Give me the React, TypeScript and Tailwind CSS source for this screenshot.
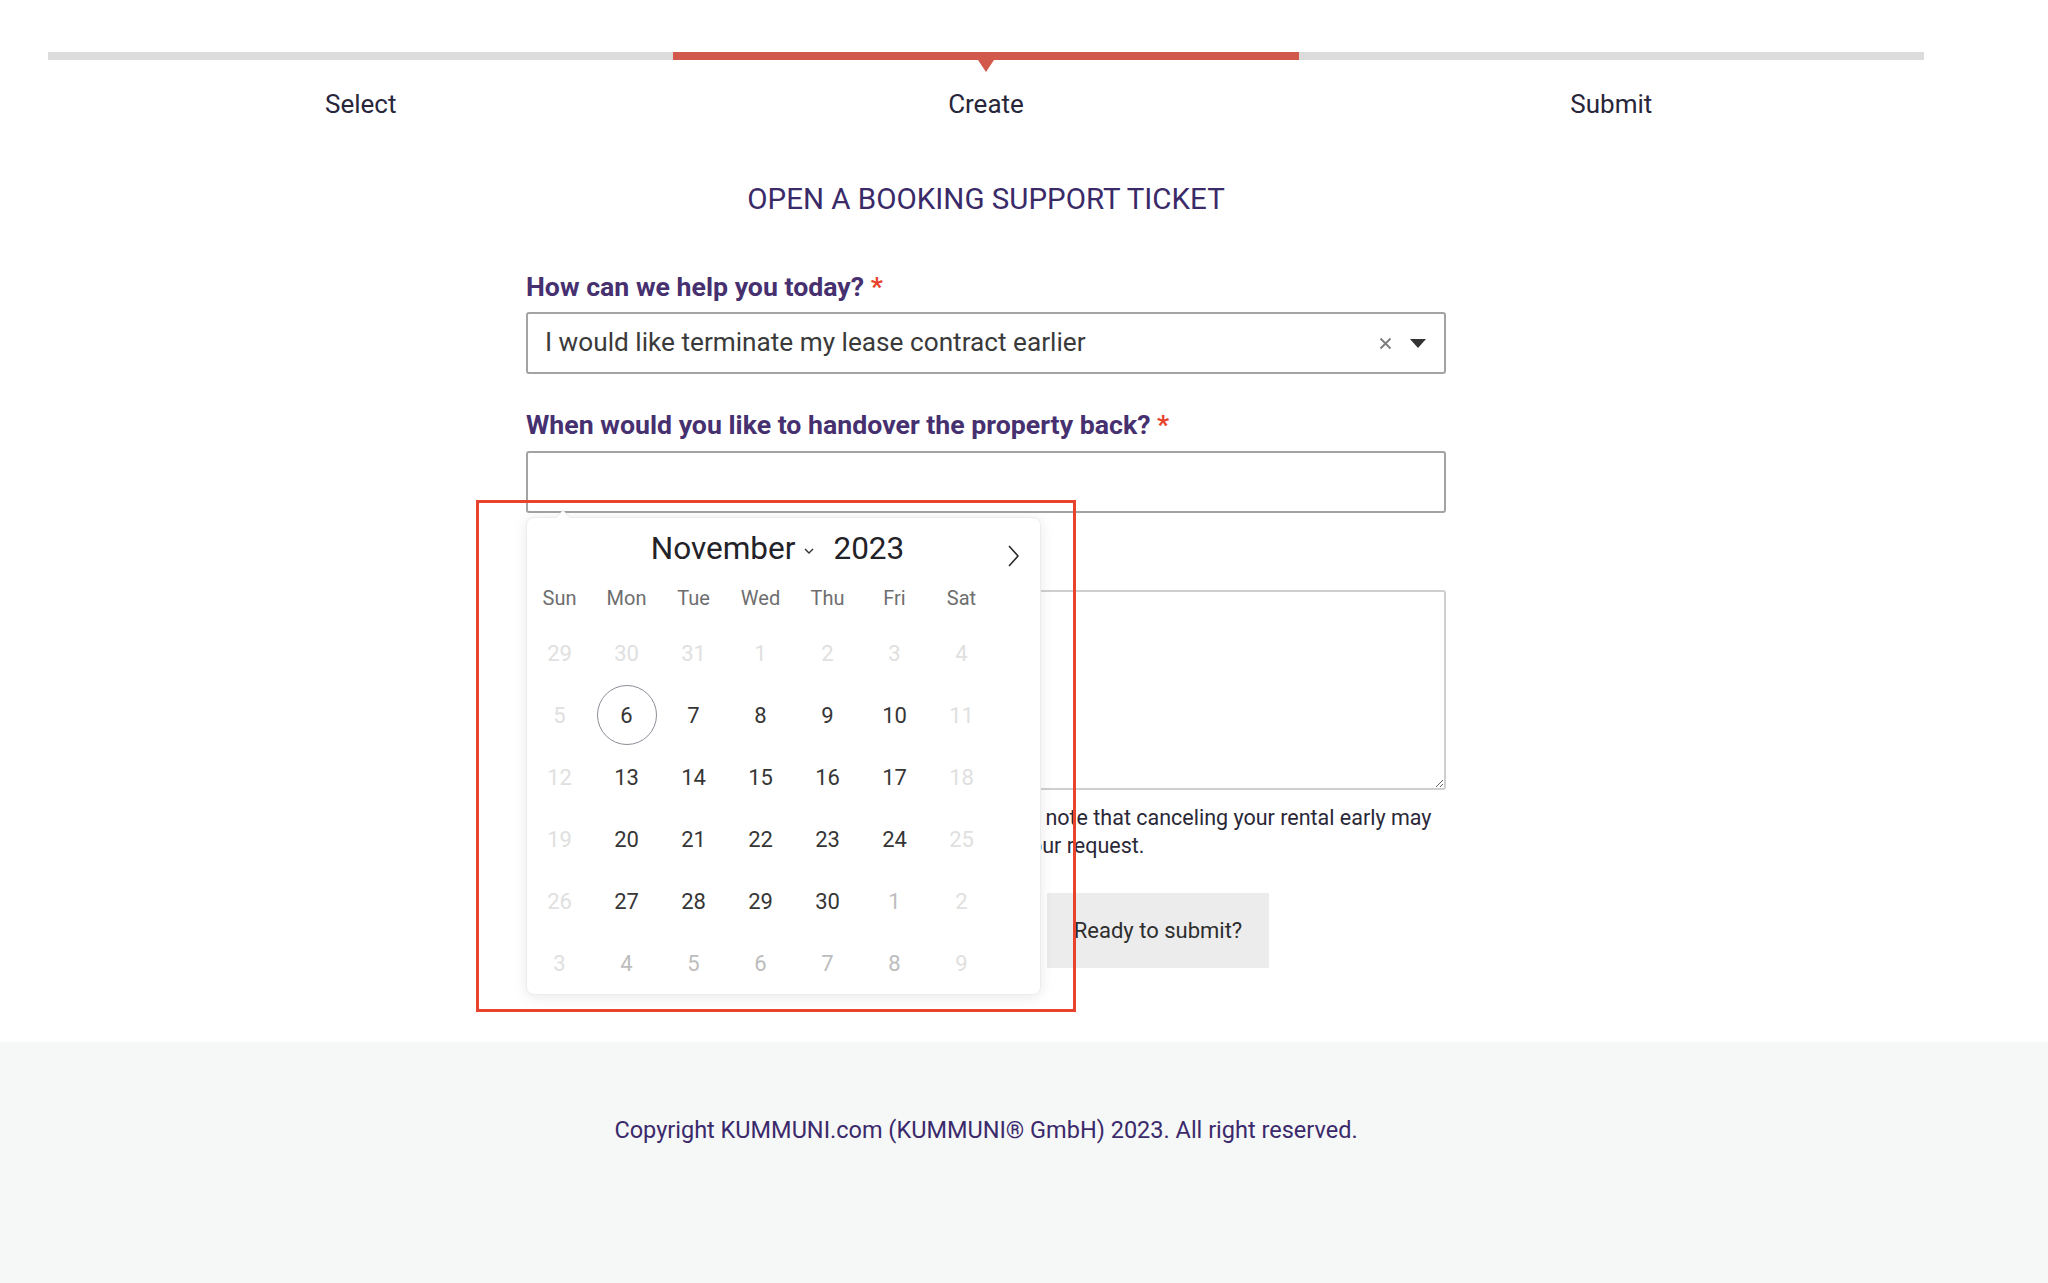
import React from "react";

type Kind = "off" | "on" | "next" | "today";

const weeks: [string, Kind][][] = [
  [["29", "off"], ["30", "off"], ["31", "off"], ["1", "off"], ["2", "off"], ["3", "off"], ["4", "off"]],
  [["5", "off"], ["6", "today"], ["7", "on"], ["8", "on"], ["9", "on"], ["10", "on"], ["11", "off"]],
  [["12", "off"], ["13", "on"], ["14", "on"], ["15", "on"], ["16", "on"], ["17", "on"], ["18", "off"]],
  [["19", "off"], ["20", "on"], ["21", "on"], ["22", "on"], ["23", "on"], ["24", "on"], ["25", "off"]],
  [["26", "off"], ["27", "on"], ["28", "on"], ["29", "on"], ["30", "on"], ["1", "next"], ["2", "off"]],
  [["3", "off"], ["4", "next"], ["5", "next"], ["6", "next"], ["7", "next"], ["8", "next"], ["9", "off"]],
];

const steps = [
  { label: "Select", active: false },
  { label: "Create", active: true },
  { label: "Submit", active: false },
];

function DayCell({ day, kind }: { day: string; kind: Kind }) {
  const color =
    kind === "on" || kind === "today"
      ? "text-[#363636]"
      : kind === "next"
        ? "text-[#bdbdbd]"
        : "text-[#e0e0e0]";
  return (
    <div className={`flex h-[62px] w-[67px] items-center justify-center text-[22px] ${color}`}>
      {kind === "today" ? (
        <span className="flex h-[60px] w-[60px] items-center justify-center rounded-full border border-[#8d8d96]">
          {day}
        </span>
      ) : (
        day
      )}
    </div>
  );
}

function DatePicker() {
  return (
    <div className="absolute left-0 top-[66px] z-10 w-[515px] rounded-[8px] border border-[#ececec] bg-white shadow-[0_2px_14px_rgba(0,0,0,0.09)]">
      {/* little pointer up to the input */}
      <div className="absolute -top-[8px] left-[28px] h-0 w-0 border-x-[8px] border-b-[8px] border-x-transparent border-b-[#e6e6e6]" />
      <div className="absolute -top-[7px] left-[29px] h-0 w-0 border-x-[7px] border-b-[7px] border-x-transparent border-b-white" />

      <div className="relative flex h-[49px] items-end justify-center pr-[12px] text-[31.5px] leading-[36px] text-[#222228]">
        <span>November</span>
        <svg className="mb-[13px] ml-[9px] mr-[19px]" width="10" height="6" viewBox="0 0 10 6">
          <polyline points="1,1 5,5 9,1" fill="none" stroke="#333" strokeWidth="1.4" />
        </svg>
        <span>2023</span>
        <svg className="absolute left-[481px] top-[27px]" width="11" height="22" viewBox="0 0 11 22">
          <polyline points="1,1 10,11 1,21" fill="none" stroke="#2a2a2a" strokeWidth="1.6" />
        </svg>
      </div>

      <div className="-ml-px mt-[11px] grid grid-cols-[repeat(7,67px)] text-[20px] text-[#6e6e6e]">
        {["Sun", "Mon", "Tue", "Wed", "Thu", "Fri", "Sat"].map((d) => (
          <div key={d} className="flex h-[40px] items-center justify-center">
            {d}
          </div>
        ))}
      </div>

      <div className="-ml-px mt-[4px] grid grid-cols-[repeat(7,67px)]">
        {weeks.flat().map(([day, kind], i) => (
          <DayCell key={i} day={day} kind={kind} />
        ))}
      </div>

      {/* red annotation frame */}
      <div className="pointer-events-none absolute -left-[51px] -top-[18px] z-20 h-[512px] w-[600px] border-[3px] border-[#e8432d]" />
    </div>
  );
}

export default function App() {
  return (
    <div className="min-h-screen bg-white font-['Roboto','Liberation_Sans',sans-serif]">
      <div className="ml-[48px] w-[1876px] pt-[52px]">
        <div className="flex">
          {steps.map((s) => (
            <div key={s.label} className="flex flex-1 flex-col items-center">
              <div className={`relative h-[8px] w-full ${s.active ? "bg-[#d2584c]" : "bg-[#dcdcdc]"}`}>
                {s.active && (
                  <div className="absolute left-1/2 top-full h-0 w-0 -translate-x-1/2 border-x-[8px] border-t-[12px] border-x-transparent border-t-[#d2584c]" />
                )}
              </div>
              <div className="mt-[29px] text-[26px] leading-[30px] text-[#28263a]">{s.label}</div>
            </div>
          ))}
        </div>

        <div className="mx-auto w-[920px] pb-[74px]">
          <h1 className="mt-[62px] text-center text-[29.5px] font-normal leading-[36px] text-[#3a2a68]">
            OPEN A BOOKING SUPPORT TICKET
          </h1>

          <label className="mt-[55px] block text-[26.7px] font-bold leading-[30px] text-[#46306f]">
            How can we help you today? <span className="text-[#e8432d]">*</span>
          </label>
          <div className="mt-[10px] flex h-[62px] items-center rounded-[3px] border-2 border-[#a3a3a3] pl-[17px] pr-[18px]">
            <span className="flex-1 text-[26.2px] text-[#3a3a3a]">I would like terminate my lease contract earlier</span>
            <svg className="mr-[18px]" width="13" height="13" viewBox="0 0 13 13">
              <path d="M1.5 1.5 L11.5 11.5 M11.5 1.5 L1.5 11.5" stroke="#7c7c7c" strokeWidth="1.8" />
            </svg>
            <svg width="16" height="9" viewBox="0 0 16 9">
              <polygon points="0,0 16,0 8,9" fill="#333" />
            </svg>
          </div>

          <label className="mt-[36px] block text-[26.7px] font-bold leading-[30px] text-[#46306f]">
            When would you like to handover the property back? <span className="text-[#e8432d]">*</span>
          </label>
          <div className="relative mt-[11px]">
            <div className="h-[62px] rounded-[3px] border-2 border-[#a3a3a3] bg-white" />
            <DatePicker />
          </div>

          <label className="mt-[36px] block text-[26.7px] font-bold leading-[30px] text-[#46306f]">
            Comments <span className="text-[#e8432d]">*</span>
          </label>
          <textarea className="mt-[11px] block h-[200px] w-full rounded-[3px] border-2 border-[#cfcfcf] outline-none" />

          <p className="mt-[14px] text-[21.5px] leading-[28px] text-[#2a2838]">
            Termination requests are handled by our team. Please note that canceling your rental early may
            <br />
            incur fees which will be confirmed after we process your request.
          </p>

          <div className="mt-[33px] flex pl-[521px]">
            <button className="h-[75px] w-[222px] bg-[#ececec] text-[22px] text-[#2e2e2e]">Ready to submit?</button>
          </div>
        </div>
      </div>

      <footer className="h-[241px] bg-[#f6f7f7] pt-[73px]">
        <p className="ml-[48px] w-[1876px] text-center text-[23.5px] leading-[30px] text-[#3b2a6b]">
          Copyright KUMMUNI.com (KUMMUNI® GmbH) 2023. All right reserved.
        </p>
      </footer>
    </div>
  );
}
